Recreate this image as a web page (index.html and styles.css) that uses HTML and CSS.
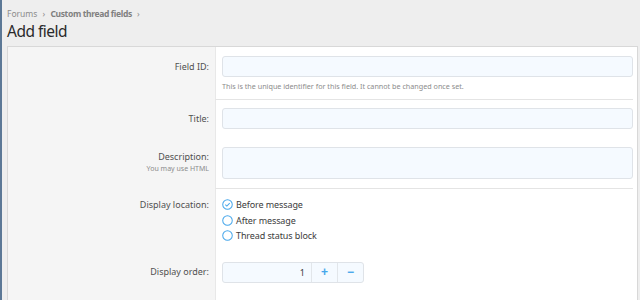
FILE: index.html
```html
<!DOCTYPE html>
<html lang="en">
<head>
    <meta charset="UTF-8">
    <meta name="viewport" content="width=device-width, initial-scale=1.0">
    <title>Add field</title>
    <link rel="stylesheet" href="styles.css">
</head>
<body>
    <div class="page">
        <div class="breadcrumbs">
            <a href="#">Forums</a>
            <span class="sep">&rsaquo;</span>
            <a href="#" class="strong">Custom thread fields</a>
            <span class="sep">&rsaquo;</span>
        </div>
        <h1 class="page-title">Add field</h1>

        <form class="block">
            <div class="row first">
                <div class="label">Field ID:</div>
                <div class="control line">
                    <input type="text" class="input">
                    <div class="hint">This is the unique identifier for this field. It cannot be changed once set.</div>
                </div>
            </div>

            <div class="row">
                <div class="label">Title:</div>
                <div class="control">
                    <input type="text" class="input">
                </div>
            </div>

            <div class="row">
                <div class="label">Description:<span class="sub">You may use HTML</span></div>
                <div class="control line">
                    <textarea class="input textarea"></textarea>
                </div>
            </div>

            <div class="row choices">
                <div class="label">Display location:</div>
                <div class="control">
                    <ul class="radios">
                        <li><span class="radio"><svg viewBox="0 0 12 12" width="11" height="11"><circle cx="6" cy="6" r="5.2" fill="none" stroke="#47a7eb" stroke-width="1.1"/><path d="M3.6 6.1l1.7 1.6 3.1-3.2" fill="none" stroke="#47a7eb" stroke-width="1.1"/></svg></span>Before message</li>
                        <li><span class="radio"><svg viewBox="0 0 12 12" width="11" height="11"><circle cx="6" cy="6" r="5.2" fill="none" stroke="#47a7eb" stroke-width="1.1"/></svg></span>After message</li>
                        <li><span class="radio"><svg viewBox="0 0 12 12" width="11" height="11"><circle cx="6" cy="6" r="5.2" fill="none" stroke="#47a7eb" stroke-width="1.1"/></svg></span>Thread status block</li>
                    </ul>
                </div>
            </div>

            <div class="row">
                <div class="label">Display order:</div>
                <div class="control">
                    <div class="spinner">
                        <input type="text" class="spin-input" value="1">
                        <button type="button" class="spin-btn">+</button>
                        <button type="button" class="spin-btn">&minus;</button>
                    </div>
                </div>
            </div>

            <div class="row">
                <div class="label"></div>
                <div class="control">
                    <input type="text" class="input">
                </div>
            </div>
        </form>
    </div>
</body>
</html>
```

FILE: styles.css
```css
body {
    margin: 0;
    background: #eeeeee;
    font-family: "Noto Sans", "Open Sans", sans-serif;
    color: #141414;
    overflow: hidden;
}
.page {
    border-left: 2px solid #5c7896;
    padding: 6px 2px 0 5px;
    height: 300px;
    box-sizing: border-box;
}
.breadcrumbs {
    font-size: 8.5px;
    line-height: 15px;
    color: #8c8c8c;
}
.breadcrumbs a {
    color: #8c8c8c;
    text-decoration: none;
}
.breadcrumbs .strong {
    font-weight: bold;
    color: #808080;
    letter-spacing: -0.35px;
}
.breadcrumbs .sep {
    margin: 0 3px;
}
.page-title {
    margin: 0 0 5px;
    font-size: 15.5px;
    font-weight: normal;
    line-height: 20px;
    letter-spacing: -0.5px;
    color: #2a2a2a;
}
.block {
    background: #fff;
    border: 1px solid #d8d8d8;
    border-bottom: none;
}
.row {
    display: flex;
}
.label {
    width: 201px;
    flex-shrink: 0;
    background: #f5f5f5;
    padding: 12px 6px 0 0;
    text-align: right;
    font-size: 9px;
    line-height: 13px;
    color: #505050;
}
.label .sub {
    display: block;
    font-size: 7px;
    line-height: 11px;
    color: #8c8c8c;
}
.control {
    flex: 1;
    padding: 8px 4px 9px 6px;
    border-left: 1px solid #e8e8e8;
}
.control.line {
    border-bottom: 1px solid #e4e4e4;
    margin-right: 4px;
    padding-right: 0;
}
.row.first .control {
    padding-top: 9px;
    padding-bottom: 7px;
}
.row.first .label {
    padding-top: 13px;
}
.row.choices .label {
    padding-top: 9px;
}
.input {
    display: block;
    box-sizing: border-box;
    width: 100%;
    height: 21px;
    margin: 0;
    background: #f5faff;
    border: 1px solid #dfe3e8;
    border-radius: 3px;
    font: inherit;
}
.textarea {
    height: 32px;
    resize: none;
    margin-top: 1px;
}
.hint {
    font-size: 7.2px;
    line-height: 11px;
    color: #8c8c8c;
    margin-top: 4px;
}
.radios {
    list-style: none;
    margin: 0;
    padding: 0;
    font-size: 9px;
    letter-spacing: -0.1px;
    color: #3c3c3c;
}
.radios li {
    display: flex;
    align-items: center;
    height: 15.5px;
}
.radio {
    display: inline-flex;
    width: 11px;
    margin-right: 3px;
}
.spinner {
    display: flex;
    width: 142px;
    height: 21px;
    margin-top: 1px;
    border: 1px solid #dfe3e8;
    border-radius: 3px;
    background: #f5faff;
    box-sizing: border-box;
}
.spin-input {
    width: 88px;
    border: none;
    background: transparent;
    text-align: right;
    padding: 0 6px;
    font: inherit;
    font-size: 9px;
    color: #3c3c3c;
    box-sizing: border-box;
}
.spin-btn {
    width: 26px;
    border: none;
    border-left: 1px solid #e2e6ea;
    background: transparent;
    color: #47a7eb;
    font-size: 12px;
    font-weight: bold;
    padding: 0;
}
```
